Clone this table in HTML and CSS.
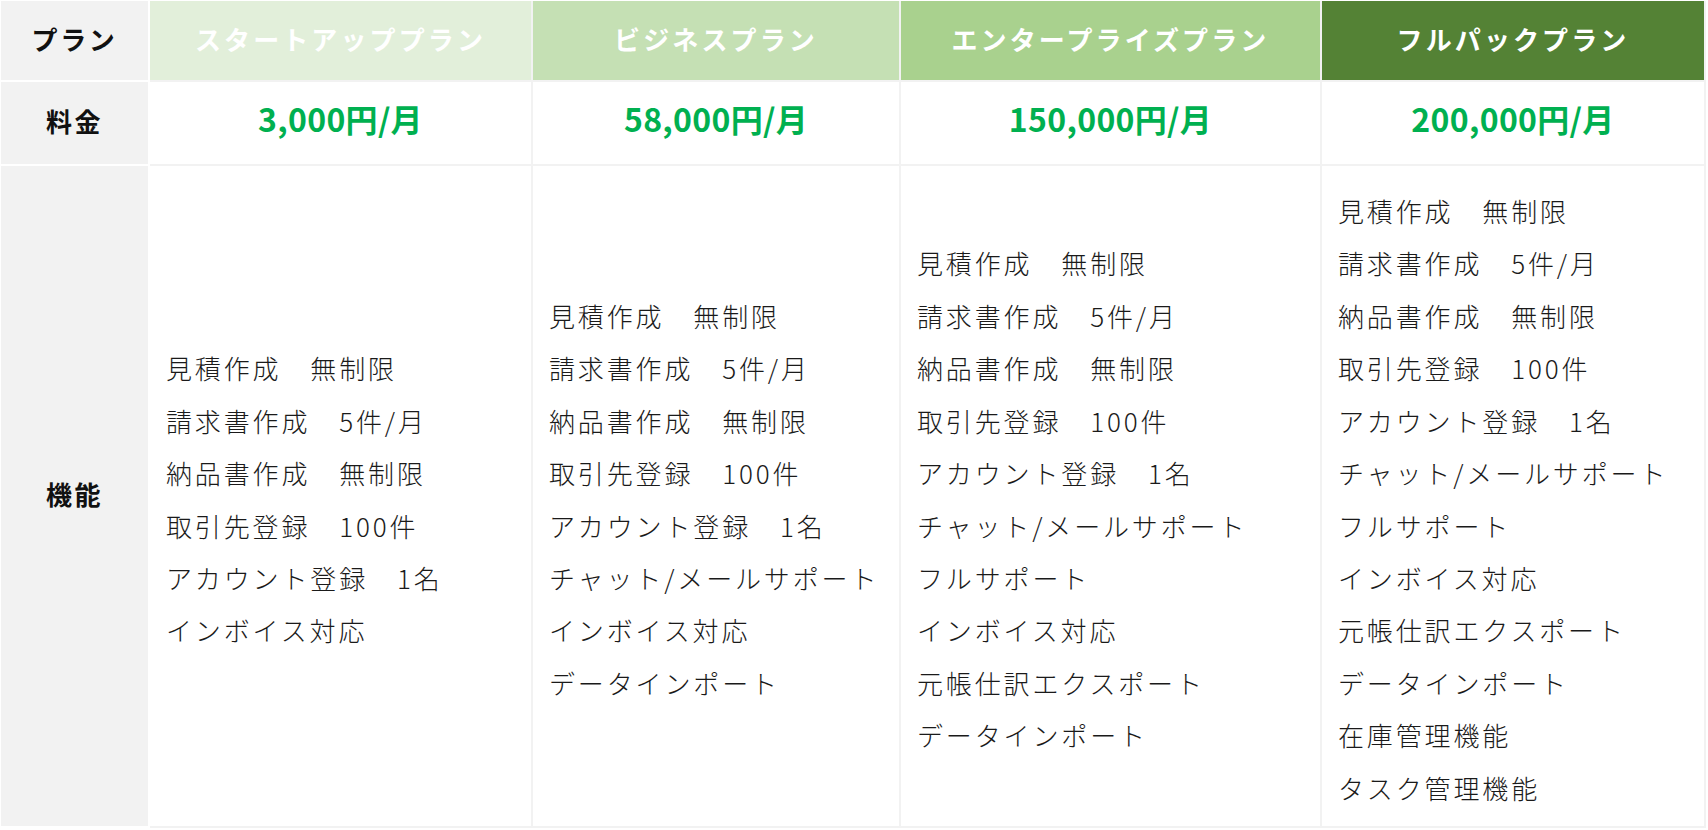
FILE: index.html
```html
<!DOCTYPE html>
<html lang="ja">
<head>
<meta charset="utf-8">
<title>プラン比較</title>
<link rel="stylesheet" href="styles.css">
</head>
<body>
<div class="plans">
  <div class="cell side head">プラン</div>
  <div class="cell plan p1">スタートアッププラン</div>
  <div class="cell plan p2">ビジネスプラン</div>
  <div class="cell plan p3">エンタープライズプラン</div>
  <div class="cell plan p4">フルパックプラン</div>

  <div class="cell side">料金</div>
  <div class="cell price">3,000円/月</div>
  <div class="cell price">58,000円/月</div>
  <div class="cell price">150,000円/月</div>
  <div class="cell price">200,000円/月</div>

  <div class="cell side">機能</div>
  <div class="cell features">
    <ul>
      <li>見積作成　無制限</li>
      <li>請求書作成　5件/月</li>
      <li>納品書作成　無制限</li>
      <li>取引先登録　100件</li>
      <li>アカウント登録　1名</li>
      <li>インボイス対応</li>
    </ul>
  </div>
  <div class="cell features">
    <ul>
      <li>見積作成　無制限</li>
      <li>請求書作成　5件/月</li>
      <li>納品書作成　無制限</li>
      <li>取引先登録　100件</li>
      <li>アカウント登録　1名</li>
      <li>チャット/メールサポート</li>
      <li>インボイス対応</li>
      <li>データインポート</li>
    </ul>
  </div>
  <div class="cell features">
    <ul>
      <li>見積作成　無制限</li>
      <li>請求書作成　5件/月</li>
      <li>納品書作成　無制限</li>
      <li>取引先登録　100件</li>
      <li>アカウント登録　1名</li>
      <li>チャット/メールサポート</li>
      <li>フルサポート</li>
      <li>インボイス対応</li>
      <li>元帳仕訳エクスポート</li>
      <li>データインポート</li>
    </ul>
  </div>
  <div class="cell features">
    <ul>
      <li>見積作成　無制限</li>
      <li>請求書作成　5件/月</li>
      <li>納品書作成　無制限</li>
      <li>取引先登録　100件</li>
      <li>アカウント登録　1名</li>
      <li>チャット/メールサポート</li>
      <li>フルサポート</li>
      <li>インボイス対応</li>
      <li>元帳仕訳エクスポート</li>
      <li>データインポート</li>
      <li>在庫管理機能</li>
      <li>タスク管理機能</li>
    </ul>
  </div>
</div>
</body>
</html>
```

FILE: styles.css
```css
html, body {
  margin: 0;
  padding: 0;
  background: #ffffff;
}

body {
  font-family: "Noto Sans CJK JP", "Noto Sans", sans-serif;
  color: #222222;
}

.plans {
  display: grid;
  grid-template-columns: 149px 383px 368px 421px 384px;
  grid-template-rows: 81px 84px 662px;
  margin: 1px 0 0 1px;
}

.cell {
  box-sizing: border-box;
  display: flex;
  align-items: center;
  justify-content: center;
  border-right: 2px solid #f2f2f2;
  border-bottom: 2px solid #f2f2f2;
  background: #ffffff;
}

.side {
  background: #f2f2f2;
  border-right-color: #ffffff;
  border-bottom-color: #ffffff;
  font-size: 26px;
  font-weight: 700;
  letter-spacing: 0.1em;
  color: #111111;
  padding-bottom: 5px;
}

.plan {
  font-size: 26px;
  font-weight: 700;
  letter-spacing: 0.12em;
  color: #ffffff;
  padding-bottom: 4px;
}

.p1 { background: #e2efda; }
.p2 { background: #c5e0b4; }
.p3 { background: #a9d18e; }
.p4 { background: #548235; }

.price {
  font-size: 32px;
  font-weight: 700;
  letter-spacing: 0.01em;
  color: #00b050;
  padding-bottom: 10px;
}

.features {
  justify-content: flex-start;
  padding: 7px 16px 0;
}

.features ul {
  list-style: none;
  margin: 0;
  padding: 0;
}

.features li {
  font-size: 26px;
  font-weight: 300;
  line-height: 52.4px;
  letter-spacing: 0.11em;
  color: #1a1a1a;
  white-space: nowrap;
}
```
